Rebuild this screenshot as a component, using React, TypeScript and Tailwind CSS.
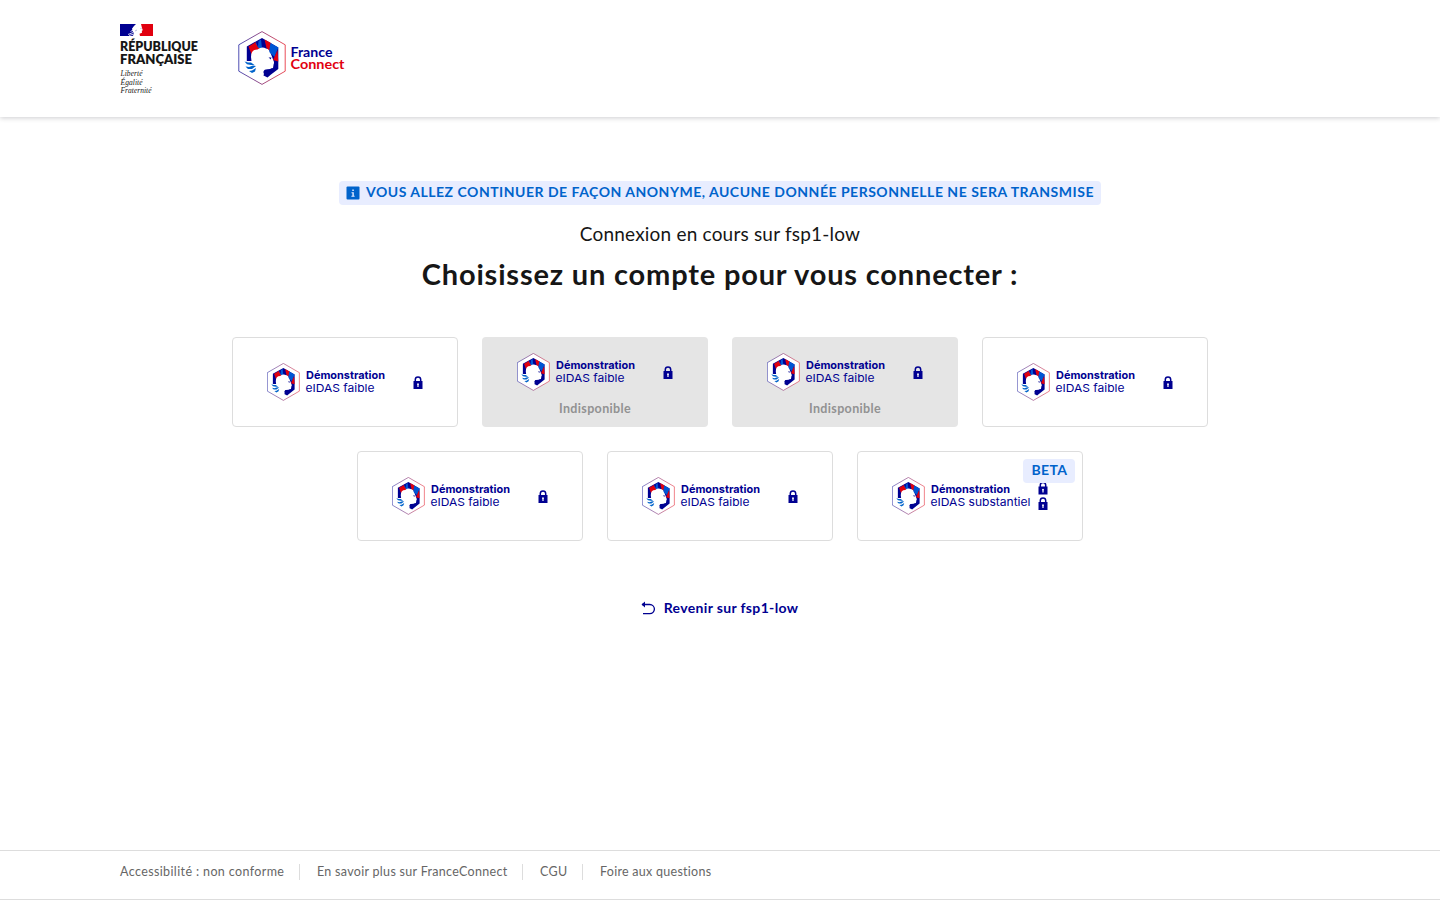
import React from "react";

function Emblem() {
  return (
    <g>
      <path d="M24 .6 47.2 13.8V40.2L24 53.4.8 40.2V13.8Z" fill="#fff" stroke="url(#edge)" strokeWidth=".7" />
      <path d="M24 7 8.800 15.500V30.500H15L18 18H31L36 31 35 37 26 38.500 24.500 44 29.500 46.500 33 43.500 40.300 38V16.500Z" fill="#000091" />
      <path d="M10.500 15.500 18 11 22 17 14.500 26Z" fill="#e1000f" />
      <path d="M17.500 12 23 8.500 24 17H20.500Z" fill="#0055d4" />
      <path d="M18 11.500 20.500 10 20 16Z" fill="#000091" />
      <path d="M26.500 8.500 33 12 31.500 20 28.500 17Z" fill="#e1000f" />
      <path d="M32.500 12 40.300 16.500 36.500 26 31 21Z" fill="#0055d4" />
      <path d="M39.500 19 40.300 30.500 35 29Z" fill="#e1000f" />
      <path d="M13 26Q13 18.500 19.500 18.500Q24 15 28 17.500Q31 18 31.500 21.500L31 24 33.500 26 34 29 36 32 34.500 33.500 34.500 36 32 38 27 38.500 25 40.500 26 43 24 48 17 45 17 40 9 32V30L13.500 30Z" fill="#fff" />
      <path d="M30.500 26.500h3l-1 2-1-1.300Z" fill="#000091" />
      <path d="M6.500 30.500 10 31.500 13 31.500 16.500 34 13 34 9 33.200ZM7.500 35.500 11 36 15 34.500 18 35 14 38 10 38ZM11 40 14 39.500 18 37 17 40.500 14 42Z" fill="#0063cb" />
    </g>
  );
}

function EdgeGradient() {
  return (
    <defs>
      <linearGradient id="edge" x1="0" x2="1" y1="0" y2="0">
        <stop offset="0" stopColor="#000091" />
        <stop offset="1" stopColor="#e1000f" />
      </linearGradient>
    </defs>
  );
}

function Lock({ y }: { y: number }) {
  return (
    <g transform={`translate(146 ${y})`}>
      <path d="M2.300 6V3.600a2.700 2.700 0 0 1 5.400 0V6" fill="none" stroke="#000091" strokeWidth="1.500" />
      <path d="M.5 5h9v8h-9Z" fill="#000091" />
      <path d="M5 7.300a1 1 0 0 1 .6 1.800V11H4.400V9.100A1 1 0 0 1 5 7.300Z" fill="#fff" />
    </g>
  );
}

function ProviderLogo({ level }: { level: "faible" | "substantiel" }) {
  const strong = level === "substantiel";
  return (
    <svg className="ml-px h-[38px] w-[158px] shrink-0" viewBox="0 0 158 38" role="img">
      <g transform="translate(-.2 0) scale(.69 .7)">
        <Emblem />
      </g>
      <text x="39" y="16" textLength="79" lengthAdjust="spacingAndGlyphs" className="fill-[#000091] font-['Inter',sans-serif] text-[11px] font-bold">Démonstration</text>
      <text x="38.500" y="29" textLength={strong ? 100 : 69} lengthAdjust="spacingAndGlyphs" className="fill-[#000091] font-['Inter',sans-serif] text-[11px]">eIDAS {level}</text>
      {strong && <Lock y={4.500} />}
      <Lock y={strong ? 20 : 13} />
    </svg>
  );
}

type Provider = { level: "faible" | "substantiel"; disabled?: boolean; beta?: boolean };

function ProviderCard({ level, disabled, beta }: Provider) {
  return (
    <button
      type="button"
      disabled={disabled}
      className={
        disabled
          ? "relative flex h-[90px] w-[226px] flex-col items-center rounded bg-[#e5e5e5] pt-4"
          : "relative flex h-[90px] w-[226px] flex-col items-center rounded border border-[#dddddd] bg-white pt-[25px]"
      }
    >
      <ProviderLogo level={level} />
      {disabled && (
        <span className="mt-2 font-['Lato',sans-serif] text-[12.500px] leading-5 font-bold tracking-[0.35px] text-[#929292]">Indisponible</span>
      )}
      {beta && (
        <span className="absolute top-[7px] right-[7px] flex h-6 w-[52px] items-center justify-center rounded bg-[#e8edff] pb-0.5 pl-px font-['Lato',sans-serif] text-[14px] leading-5 font-bold tracking-[0.4px] text-[#0063cb]">BETA</span>
      )}
    </button>
  );
}

const rows: Provider[][] = [
  [{ level: "faible" }, { level: "faible", disabled: true }, { level: "faible", disabled: true }, { level: "faible" }],
  [{ level: "faible" }, { level: "faible" }, { level: "substantiel", beta: true }],
];

function RepublicLogo() {
  return (
    <svg className="h-[72px] w-[80px]" viewBox="0 0 80 72" role="img">
      <path d="M0 0h16.500v12H0Z" fill="#000091" />
      <path d="M16.500 0H33v12H16.500Z" fill="#e1000f" />
      <path d="M12.500 12Q15 10 13 8Q11 5 14 2L16 0h5l1 4 .8 2.200-1 .5.2 2-2.500 1 .5 2.300Z" fill="#fff" />
      <path d="M8 10.500 13 8.500M9 11.500 14 10M12 5 15 3M10.500 7.500 14 5.500" stroke="#fff" strokeWidth=".8" />
      <path d="M15 7 17 6M20.500 4.500h1" stroke="#8585c8" strokeWidth=".6" />
      <g className="fill-[#161616] font-['Lato',sans-serif] text-[12.500px] font-extrabold">
        <text x="0" y="27" textLength="78" lengthAdjust="spacingAndGlyphs">RÉPUBLIQUE</text>
        <text x="0" y="40" textLength="72" lengthAdjust="spacingAndGlyphs">FRANÇAISE</text>
      </g>
      <g className="fill-[#161616] font-['Liberation_Serif',serif] text-[7.500px] italic">
        <text x=".5" y="52" textLength="22">Liberté</text>
        <text x=".5" y="60.500" textLength="22">Égalité</text>
        <text x=".5" y="69" textLength="31">Fraternité</text>
      </g>
    </svg>
  );
}

function ConnectLogo() {
  return (
    <svg className="h-[54px] w-[108px]" viewBox="0 0 108 54" role="img">
      <EdgeGradient />
      <Emblem />
      <g className="font-['Lato',sans-serif] text-[12.500px] font-bold">
        <text x="52.500" y="26" textLength="42" lengthAdjust="spacingAndGlyphs" className="fill-[#000091]">France</text>
        <text x="52.500" y="37.500" textLength="54" lengthAdjust="spacingAndGlyphs" className="fill-[#e1000f]">Connect</text>
      </g>
    </svg>
  );
}

export default function App() {
  return (
    <div className="flex h-[900px] flex-col overflow-hidden bg-white font-['Lato',sans-serif] text-[#161616]">
      <header className="flex h-[117px] shrink-0 items-start pl-[120px] shadow-[0_1px_5px_rgba(0,0,18,0.2)]">
        <div className="pt-6"><RepublicLogo /></div>
        <div className="pt-[31px] pl-[37.500px]"><ConnectLogo /></div>
      </header>

      <main className="flex grow flex-col items-center pt-16">
        <p className="flex h-6 w-[762px] items-center rounded bg-[#e8edff] pl-[7px] whitespace-nowrap text-[#0063cb]">
          <svg className="size-[14px]" viewBox="0 0 14 14" fill="none">
            <rect x=".5" y=".5" width="13" height="13" rx="1" fill="currentColor" />
            <path d="M6.300 3.500h1.500V5H6.300ZM5.500 6.200h2.300v3.600h.8v1H5.400v-1h1V7.200h-.9Z" fill="#e8edff" />
          </svg>
          <span className="-mt-0.5 ml-1.5 text-[14px] leading-6 font-bold tracking-[0.51px]">VOUS ALLEZ CONTINUER DE FAÇON ANONYME, AUCUNE DONNÉE PERSONNELLE NE SERA TRANSMISE</span>
        </p>
        <p className="mt-[15px] text-[19px] leading-7 tracking-[0.2px] whitespace-nowrap">Connexion en cours sur fsp1-low</p>
        <h1 className="mt-2 text-[29px] leading-9 font-bold tracking-[0.82px] whitespace-nowrap">Choisissez un compte pour vous connecter :</h1>

        <div className="mt-[45px] flex flex-col items-center gap-6">
          {rows.map((row, i) => (
            <div key={i} className="flex gap-6">
              {row.map((p, j) => <ProviderCard key={j} {...p} />)}
            </div>
          ))}
        </div>

        <a href="#" className="mt-[54px] mr-0.5 flex h-6 items-center text-[14px] font-bold text-[#000091]">
          <svg className="mt-px mr-2 size-4" viewBox="0 0 16 16" fill="none" stroke="currentColor">
            <path d="M2 4.500h7.800a4.600 4.600 0 0 1 0 9.200H3" strokeWidth="1.300" />
            <path d="M5 1.500v6L1.500 4.500Z" fill="currentColor" stroke="none" />
          </svg>
          <span className="tracking-[0.35px]">Revenir sur fsp1-low</span>
        </a>
      </main>

      <footer className="flex h-[50px] shrink-0 items-start border-y border-[#dddddd] pt-[9px] pl-[120px] text-[12.500px] leading-6 whitespace-nowrap text-[#666666]">
        <a href="#" className="w-[164px] tracking-[0.38px]">Accessibilité : non conforme</a>
        <span className="mt-1 mr-[17px] ml-[15px] h-4 w-px bg-[#dddddd]" />
        <a href="#" className="w-[190px] tracking-[0.3px]">En savoir plus sur FranceConnect</a>
        <span className="mt-1 mr-[17px] ml-[15px] h-4 w-px bg-[#dddddd]" />
        <a href="#" className="w-[27px] tracking-[0.3px]">CGU</a>
        <span className="mt-1 mr-[17px] ml-[15px] h-4 w-px bg-[#dddddd]" />
        <a href="#" className="tracking-[0.27px]">Foire aux questions</a>
      </footer>
    </div>
  );
}
